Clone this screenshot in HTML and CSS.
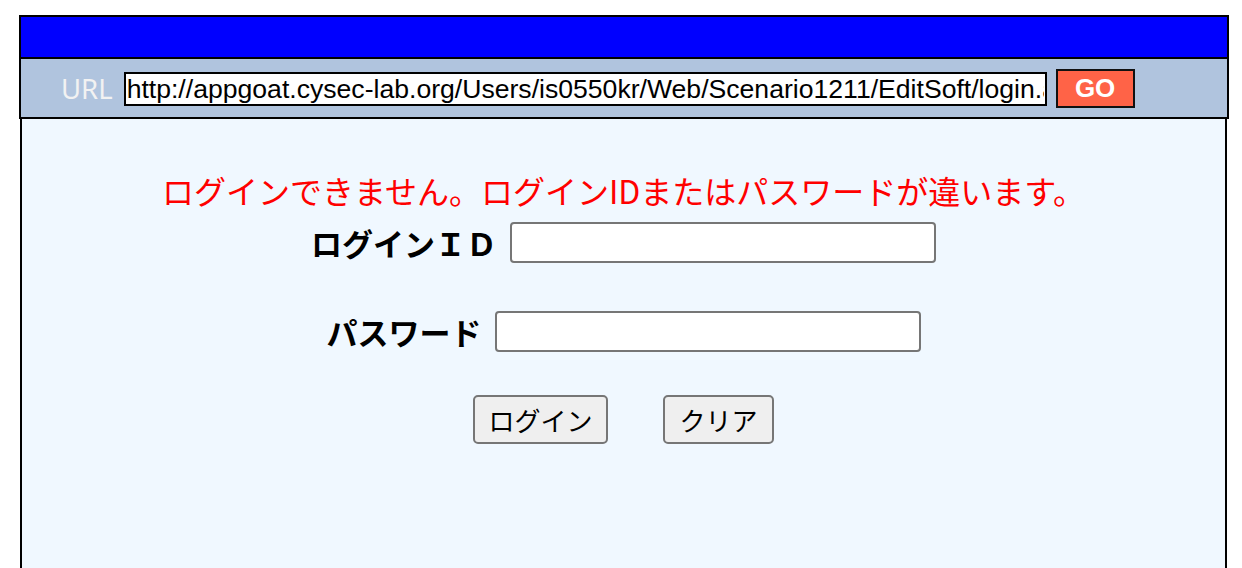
FILE: index.html
```html
<!DOCTYPE html>
<html lang="ja">
<head>
<meta charset="utf-8">
<title>ログイン</title>
<link rel="stylesheet" href="styles.css">
</head>
<body>
<div class="page">
  <div class="header">
    <div class="titlebar"></div>
    <div class="urlbar">
      <span class="url-label">URL</span>
      <input class="url-input" type="text" value="http://appgoat.cysec-lab.org/Users/is0550kr/Web/Scenario1211/EditSoft/login.aspx">
      <button class="go" type="button">GO</button>
    </div>
  </div>
  <div class="content">
    <p class="error">ログインできません。ログインIDまたはパスワードが違います。</p>
    <div class="row row-id">
      <label class="label" for="uid">ログインＩＤ</label>
      <input class="field" id="uid" type="text">
    </div>
    <div class="row row-pw">
      <label class="label" for="pw">パスワード</label>
      <input class="field" id="pw" type="password">
    </div>
    <div class="buttons">
      <button class="btn btn-login" type="button">ログイン</button>
      <button class="btn btn-clear" type="button">クリア</button>
    </div>
  </div>
</div>
</body>
</html>
```

FILE: styles.css
```css
html, body {
  margin: 0;
  padding: 0;
  background: #ffffff;
  font-family: "Noto Sans CJK JP", "Noto Sans", sans-serif;
}

.page {
  padding-top: 15px;
}

.header {
  margin-left: 19px;
  width: 1210px;
  box-sizing: border-box;
  border: 2px solid #000;
}

.titlebar {
  height: 40px;
  background: #0000ff;
  border-bottom: 2px solid #000;
}

.urlbar {
  height: 58px;
  background: #b0c4de;
  display: flex;
  align-items: center;
  padding-left: 40px;
  padding-top: 2px;
  box-sizing: border-box;
}

.url-label {
  font-family: "Noto Sans", "Open Sans", sans-serif;
  font-size: 27.5px;
  letter-spacing: 0;
  color: #f2f2f2;
  margin-right: 11px;
  line-height: 34px;
}

.url-input {
  width: 923px;
  height: 34px;
  box-sizing: border-box;
  border: 2px solid #000;
  border-radius: 0;
  padding: 0 1px;
  margin: 0;
  font-family: "Liberation Sans", Arial, sans-serif;
  font-size: 26.6px;
  color: #000;
  background: #fff;
  outline: none;
}

.go {
  margin-left: 9px;
  width: 79px;
  height: 39px;
  box-sizing: border-box;
  border: 2px solid #111;
  border-radius: 0;
  background: #ff6347;
  color: #fff;
  font-family: "Liberation Sans", Arial, sans-serif;
  font-weight: bold;
  font-size: 26px;
  padding: 0;
  margin-top: -1px;
}

.content {
  margin-left: 20px;
  width: 1207px;
  box-sizing: border-box;
  border-left: 2px solid #000;
  border-right: 2px solid #000;
  background: #f0f8ff;
  min-height: 460px;
  padding-top: 48px;
  display: flex;
  flex-direction: column;
  align-items: center;
}

.error {
  margin: 0;
  color: #ff0000;
  font-size: 32px;
  line-height: 46px;
  white-space: nowrap;
}

.row {
  display: flex;
  align-items: center;
  gap: 13px;
}

.row-id {
  margin-top: 9px;
}

.row-pw {
  margin-top: 48px;
}

.label {
  font-weight: bold;
  font-size: 31px;
  line-height: 41px;
  color: #000;
}

.field {
  width: 426px;
  height: 41px;
  box-sizing: border-box;
  border: 2px solid #767676;
  border-radius: 4px;
  background: #fff;
  margin: 0;
  padding: 0 4px;
  font-size: 22px;
}

.buttons {
  margin-top: 43px;
  display: flex;
  gap: 55px;
}

.btn {
  height: 49px;
  box-sizing: border-box;
  border: 2px solid #767676;
  border-radius: 5px;
  background: #efefef;
  color: #000;
  font-family: "Noto Sans CJK JP", sans-serif;
  font-size: 26px;
  padding: 0;
  margin: 0;
}

.btn-login {
  width: 135px;
}

.btn-clear {
  width: 111px;
}
```
